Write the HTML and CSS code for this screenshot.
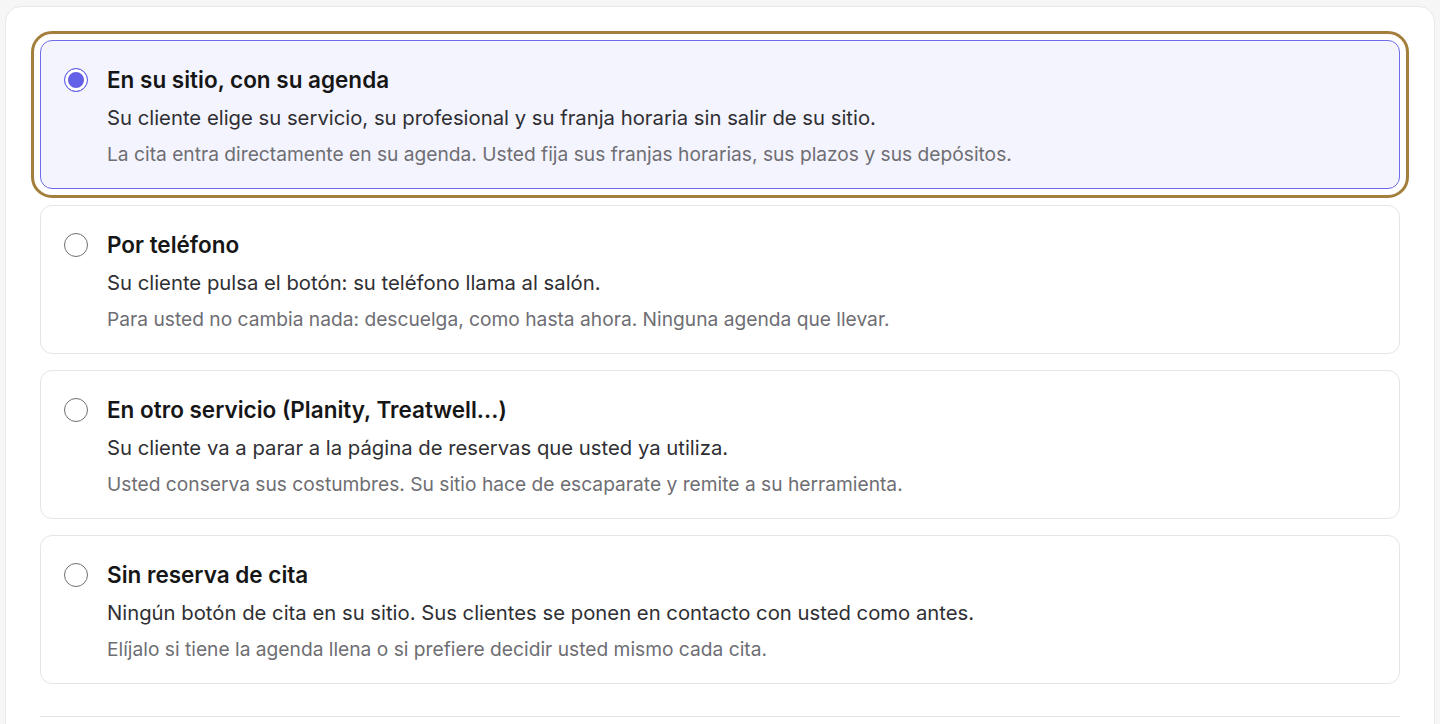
FILE: index.html
```html
<!DOCTYPE html>
<html lang="es">
<head>
    <meta charset="UTF-8">
    <meta name="viewport" content="width=device-width, initial-scale=1.0">
    <title>Reserva de cita</title>
    <link rel="stylesheet" href="styles.css">
</head>
<body>
    <div class="page">
        <div class="card">
            <div class="options">
                <label class="option selected">
                    <input type="radio" name="booking" value="site" checked>
                    <div class="text">
                        <p class="title">En su sitio, con su agenda</p>
                        <p class="desc">Su cliente elige su servicio, su profesional y su franja horaria sin salir de su sitio.</p>
                        <p class="note">La cita entra directamente en su agenda. Usted fija sus franjas horarias, sus plazos y sus depósitos.</p>
                    </div>
                </label>
                <label class="option">
                    <input type="radio" name="booking" value="phone">
                    <div class="text">
                        <p class="title">Por teléfono</p>
                        <p class="desc">Su cliente pulsa el botón: su teléfono llama al salón.</p>
                        <p class="note">Para usted no cambia nada: descuelga, como hasta ahora. Ninguna agenda que llevar.</p>
                    </div>
                </label>
                <label class="option">
                    <input type="radio" name="booking" value="other">
                    <div class="text">
                        <p class="title">En otro servicio (Planity, Treatwell...)</p>
                        <p class="desc">Su cliente va a parar a la página de reservas que usted ya utiliza.</p>
                        <p class="note">Usted conserva sus costumbres. Su sitio hace de escaparate y remite a su herramienta.</p>
                    </div>
                </label>
                <label class="option">
                    <input type="radio" name="booking" value="none">
                    <div class="text">
                        <p class="title">Sin reserva de cita</p>
                        <p class="desc">Ningún botón de cita en su sitio. Sus clientes se ponen en contacto con usted como antes.</p>
                        <p class="note">Elíjalo si tiene la agenda llena o si prefiere decidir usted mismo cada cita.</p>
                    </div>
                </label>
            </div>
            <div class="divider"></div>
        </div>
    </div>
</body>
</html>
```

FILE: styles.css
```css
* {
    margin: 0;
    padding: 0;
    box-sizing: border-box;
}
body {
    background-color: #f6f6f6;
    font-family: Inter, "Noto Sans", sans-serif;
    color: #1a1a1a;
    height: 100vh;
    overflow: hidden;
}
.page {
    padding: 6px 5px 0;
}
.card {
    background-color: white;
    border: 1px solid #e8e8e8;
    border-radius: 16px;
    padding: 33px 34px 60px;
}
.options {
    display: flex;
    flex-direction: column;
    gap: 16px;
}
.option {
    display: flex;
    align-items: flex-start;
    gap: 19px;
    height: 149px;
    padding: 25px 23px 0;
    border: 1px solid #e5e5e5;
    border-radius: 12px;
    background-color: white;
    cursor: pointer;
}
.option.selected {
    background-color: #f4f4fe;
    border-color: #6d6be6;
    outline: 3px solid #a47f3c;
    outline-offset: 6px;
}
.option input {
    appearance: none;
    flex-shrink: 0;
    width: 24px;
    height: 24px;
    margin-top: 2px;
    border: 1.5px solid #707070;
    border-radius: 50%;
    background-color: white;
}
.option input:checked {
    border: 1.5px solid #6360e8;
    background-color: #6360e8;
    box-shadow: inset 0 0 0 3px white;
}
.title {
    font-size: 22.5px;
    font-weight: 600;
    line-height: 28px;
    color: #161616;
}
.desc {
    margin-top: 10px;
    font-size: 20.3px;
    line-height: 28px;
    color: #2f2f33;
}
.note {
    margin-top: 8px;
    font-size: 19.2px;
    line-height: 28px;
    color: #6e6e73;
}
.divider {
    margin-top: 32px;
    height: 1px;
    background-color: #e5e5e5;
}
```
